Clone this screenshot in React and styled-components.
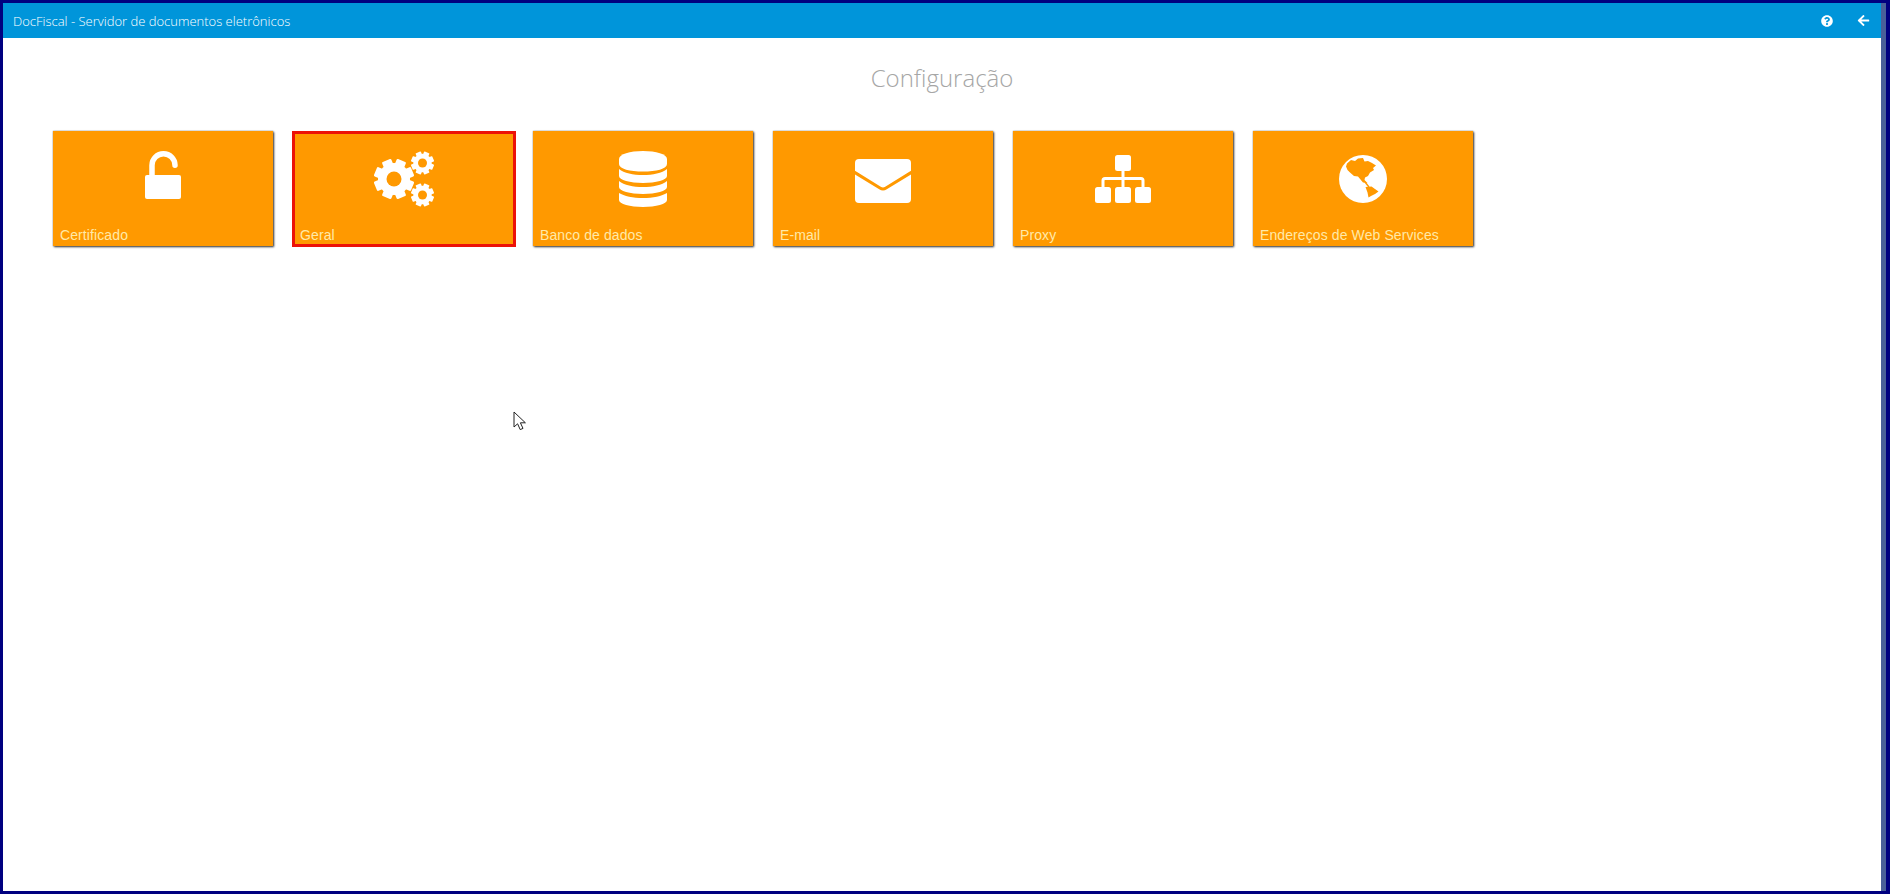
import React from "react";
import styled, { createGlobalStyle } from "styled-components";
import { FaQuestionCircle, FaArrowLeft } from "react-icons/fa";

const GlobalStyle = createGlobalStyle`
  html, body {
    margin: 0;
    height: 100%;
    background: #fff;
    overflow: hidden;
  }
  #root {
    height: 100%;
  }
`;

const LockIcon = () => (
  <svg width="36" height="56" viewBox="0 0 36 56">
    <rect x="0" y="24" width="36" height="24" rx="2" fill="#fff" />
    <path
      d="M7 25V14.25A11.5 11.5 0 0 1 30 14.25"
      fill="none"
      stroke="#fff"
      strokeWidth="5.5"
      strokeLinecap="round"
    />
  </svg>
);

const Gear = ({ x, y, r, hole }) => (
  <g transform={`translate(${x} ${y})`}>
    {[0, 45, 90, 135, 180, 225, 270, 315].map(a => (
      <rect
        key={a}
        x={-r * 0.25}
        y={-r}
        width={r * 0.5}
        height={r}
        rx={r * 0.06}
        fill="#fff"
        transform={`rotate(${a + 22.5})`}
      />
    ))}
    <circle r={r * 0.8} fill="#fff" />
    <circle r={hole} fill="#ff9900" />
  </g>
);

const GearsIcon = () => (
  <svg width="60" height="56" viewBox="0 0 60 56">
    <Gear x={20} y={28} r={20} hole={7.5} />
    <Gear x={48.5} y={12} r={11.5} hole={4.5} />
    <Gear x={48.5} y={44} r={11.5} hole={4.5} />
  </svg>
);

const DatabaseIcon = () => (
  <svg width="48" height="56" viewBox="0 0 48 56" fill="#fff">
    <path d="M0 8C0 3 11 0 24 0S48 3 48 8V13C48 18 37 20.5 24 20.5S0 18 0 13Z" />
    <path d="M0 18C5 22 14 24 24 24S43 22 48 18V25C48 29 37 32 24 32S0 29 0 25Z" />
    <path d="M0 30C5 34 14 36 24 36S43 34 48 30V36C48 40 37 43 24 43S0 40 0 36Z" />
    <path d="M0 42C5 45 14 47 24 47S43 45 48 42V49C48 53 37 56 24 56S0 53 0 49Z" />
  </svg>
);

const EnvelopeIcon = () => (
  <svg width="56" height="48" viewBox="0 -4 56 48">
    <rect width="56" height="44" rx="4" fill="#fff" />
    <path d="M-1 13L25 29Q28 31 31 29L57 13" fill="none" stroke="#ff9900" strokeWidth="3" />
  </svg>
);

const SitemapIcon = () => (
  <svg width="56" height="48" viewBox="0 0 56 48" fill="#fff">
    <rect x="20" y="0" width="16" height="16" rx="2.5" />
    <rect x="0" y="32" width="16" height="16" rx="2.5" />
    <rect x="20" y="32" width="16" height="16" rx="2.5" />
    <rect x="40" y="32" width="16" height="16" rx="2.5" />
    <path d="M28 15V33M8 33V25.5Q8 23.5 10 23.5H46Q48 23.5 48 25.5V33" fill="none" stroke="#fff" strokeWidth="3" />
  </svg>
);

const GlobeIcon = () => (
  <svg width="48" height="48" viewBox="0 0 48 48">
    <circle cx="24" cy="24" r="24" fill="#fff" />
    <path
      fill="#ff9900"
      d="M8 8.5L12 5L16 6L19 3.5L24 3L25.5 6.5L29 6L33 8L37 10.5L34 13L35 15L31 17.5L29 21L26 22.5L25.5 25L28.5 28L24 27.5L21.5 24.5L19 21.5L15 21L11 17.5L8.5 15L7 11.5Z"
    />
    <path fill="#ff9900" d="M26.5 32L32.5 31.5L36 34L39.5 36.5L36 39L32 41L29.5 42.5L28.5 37.5Z" />
    <path d="M26 27L30 32" stroke="#ff9900" strokeWidth="1.4" fill="none" />
  </svg>
);

const tiles = [
  { label: "Certificado", icon: <LockIcon /> },
  { label: "Geral", icon: <GearsIcon />, selected: true },
  { label: "Banco de dados", icon: <DatabaseIcon /> },
  { label: "E-mail", icon: <EnvelopeIcon /> },
  { label: "Proxy", icon: <SitemapIcon /> },
  { label: "Endereços de Web Services", icon: <GlobeIcon /> }
];

const App = () => (
  <Frame>
    <GlobalStyle />
    <Window>
      <TitleBar>
        <AppName>DocFiscal - Servidor de documentos eletrônicos</AppName>
        <BarActions>
          <FaQuestionCircle size={12} />
          <FaArrowLeft size={13} />
        </BarActions>
      </TitleBar>
      <Content>
        <PageTitle>Configuração</PageTitle>
        <TileRow>
          {tiles.map(t => (
            <Tile key={t.label} $selected={t.selected}>
              <TileIcon>{t.icon}</TileIcon>
              <TileLabel>{t.label}</TileLabel>
            </Tile>
          ))}
        </TileRow>
      </Content>
      <Cursor width="14" height="20" viewBox="0 0 14 20">
        <path
          d="M1 1V16L4.6 12.8L7.2 18.6L10 17.4L7.4 11.8H12.4Z"
          fill="#fff"
          stroke="#222"
          strokeWidth="1"
        />
      </Cursor>
    </Window>
  </Frame>
);

export default App;

const Frame = styled.div`
  box-sizing: border-box;
  height: 100%;
  border: solid #000080;
  border-width: 3px 4px 3px 3px;
`;

const Window = styled.div`
  position: relative;
  box-sizing: border-box;
  height: 100%;
  display: flex;
  flex-direction: column;
  border-right: 5px solid;
  border-image: linear-gradient(to right, #a9bbe2 40%, #4a6099 40%) 1;
`;

const TitleBar = styled.header`
  flex: none;
  height: 35px;
  display: flex;
  align-items: center;
  justify-content: space-between;
  padding: 0 11px 0 10px;
  background: #0095da;
  color: #fff;
`;

const AppName = styled.span`
  font: 300 13px "Open Sans", sans-serif;
`;

const BarActions = styled.div`
  display: flex;
  align-items: center;
  gap: 24px;
`;

const Content = styled.main`
  flex: 1;
  padding-top: 19px;
`;

const PageTitle = styled.h1`
  margin: 0 0 32px;
  text-align: center;
  color: #a6a6a6;
  font: 300 24px/42px "Open Sans", sans-serif;
`;

const TileRow = styled.div`
  display: flex;
  gap: 20px;
  padding-left: 50px;
`;

const Tile = styled.div`
  box-sizing: border-box;
  flex: none;
  width: ${p => (p.$selected ? "224px" : "220px")};
  height: ${p => (p.$selected ? "116px" : "115px")};
  margin: ${p => (p.$selected ? "0 -3px 0 -1px" : "0")};
  display: flex;
  flex-direction: column;
  background: #ff9900;
  box-shadow: ${p =>
    p.$selected
      ? "inset 0 0 0 3px #ec1208"
      : "1px 1px 2px rgba(0, 0, 0, 0.8), 0 0 1px rgba(0, 0, 0, 0.5)"};
  padding-left: ${p => (p.$selected ? "8px" : "7px")};
`;

const TileIcon = styled.div`
  flex: none;
  height: 96px;
  display: flex;
  align-items: center;
  justify-content: center;
  margin-left: -8px;
`;

const TileLabel = styled.span`
  font: 14px/16px "Liberation Sans", Arial, sans-serif;
  letter-spacing: 0.1px;
  color: #ffe9a8;
`;

const Cursor = styled.svg`
  position: absolute;
  left: 510px;
  top: 408px;
`;
